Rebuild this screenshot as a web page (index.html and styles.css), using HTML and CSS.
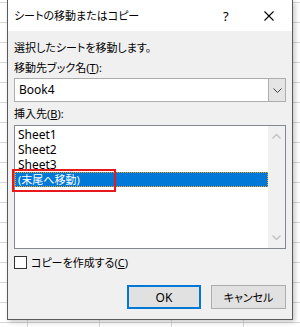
FILE: index.html
```html
<!DOCTYPE html>
<html>

<head>
  <meta charset="UTF-8" />
  <title>シートの移動またはコピー</title>
  <link rel="stylesheet" href="styles.css">
</head>

<body>
  <div class="dialog">
    <div class="titlebar">
      <span class="title">シートの移動またはコピー</span>
      <span class="help">?</span>
      <svg class="close" width="10" height="10" viewBox="0 0 10 10">
        <path d="M0.5 0.5 L9.5 9.5 M9.5 0.5 L0.5 9.5" stroke="#000" stroke-width="1.1" fill="none" />
      </svg>
    </div>
    <div class="content">
      <p class="intro">選択したシートを移動します。</p>

      <label class="field-label">移動先ブック名(<u>T</u>):</label>
      <div class="combo">
        <span class="combo-value">Book4</span>
        <span class="combo-btn">
          <svg width="9" height="5" viewBox="0 0 9 5">
            <path d="M0.5 0.5 L4.5 4.5 L8.5 0.5" stroke="#404040" stroke-width="1" fill="none" />
          </svg>
        </span>
      </div>

      <label class="field-label">挿入先(<u>B</u>):</label>
      <div class="listbox">
        <ul class="items">
          <li class="latin">Sheet1</li>
          <li class="latin">Sheet2</li>
          <li class="latin">Sheet3</li>
          <li class="selected">(末尾へ移動)</li>
        </ul>
        <div class="scrollbar">
          <svg width="9" height="5" viewBox="0 0 9 5">
            <path d="M0.5 4.5 L4.5 0.5 L8.5 4.5" stroke="#c2c2c2" stroke-width="1.4" fill="none" />
          </svg>
          <svg width="9" height="5" viewBox="0 0 9 5">
            <path d="M0.5 0.5 L4.5 4.5 L8.5 0.5" stroke="#c2c2c2" stroke-width="1.4" fill="none" />
          </svg>
        </div>
        <div class="highlight"></div>
      </div>

      <div class="check-row">
        <span class="checkbox"></span>
        <span>コピーを作成する(<u>C</u>)</span>
      </div>

      <div class="buttons">
        <button class="btn btn-default">OK</button>
        <button class="btn">キャンセル</button>
      </div>
    </div>
  </div>
</body>

</html>
```

FILE: styles.css
```css
* {
  margin: 0;
  padding: 0;
  box-sizing: border-box;
}

body {
  width: 300px;
  height: 327px;
  overflow: hidden;
  background-color: #fff;
  background-image:
    linear-gradient(to bottom, transparent 2px, #d6d6d6 2px, #d6d6d6 3px, transparent 3px),
    linear-gradient(to right, transparent 27px, #d6d6d6 27px, #d6d6d6 28px, transparent 28px);
  background-size: 100% 20px, 72px 100%;
  font-family: "Noto Sans", "Noto Sans CJK JP", sans-serif;
  font-size: 11px;
  font-feature-settings: "palt";
  color: #000;
}

.dialog {
  margin-left: 7px;
  width: 286px;
  height: 320px;
  background: #f0f0f0;
  border: 1px solid #5a5a5a;
  border-top: none;
  box-shadow: 2px 2px 5px rgba(0, 0, 0, 0.22);
}

/* title bar */
.titlebar {
  height: 31px;
  background: #fff;
  display: flex;
  align-items: center;
  padding-left: 6px;
}

.title {
  flex: 1;
  line-height: 15px;
}

.help {
  width: 12px;
  margin-right: 29px;
  font-size: 13px;
}

.close {
  margin-right: 18px;
}

/* body */
.content {
  padding: 9px 6px 0 6px;
}

.intro {
  line-height: 15px;
}

.field-label {
  display: block;
  line-height: 15px;
  margin-top: 5px;
}

u {
  text-underline-offset: 1px;
}

.combo {
  display: flex;
  height: 24px;
  margin-top: 3px;
  background: #fff;
  border: 1px solid #adadad;
}

.combo-value {
  flex: 1;
  padding-left: 4px;
  font-size: 12px;
  line-height: 22px;
}

.combo-btn {
  width: 17px;
  background: #e5e5e5;
  border-left: 1px solid #adadad;
  display: flex;
  align-items: center;
  justify-content: center;
}

.combo + .field-label {
  margin-top: 4px;
}

.listbox {
  position: relative;
  display: flex;
  height: 124px;
  margin-top: 4px;
  background: #fff;
  border: 1px solid #828790;
}

.items {
  flex: 1;
  list-style: none;
  padding-top: 1px;
}

.items li {
  height: 15px;
  line-height: 15px;
  padding-left: 3px;
}

.items li.latin {
  font-size: 12px;
}

.items li.selected {
  background: #0078d7;
  color: #fff;
  border: 1px dotted #f7a11a;
  padding-left: 2px;
  line-height: 13px;
}

.scrollbar {
  width: 17px;
  background: #f0f0f0;
  display: flex;
  flex-direction: column;
  justify-content: space-between;
  align-items: center;
  padding: 8px 0 8px 0;
}

/* red annotation box over the selected item */
.highlight {
  position: absolute;
  left: -3px;
  top: 43px;
  width: 104px;
  height: 23px;
  border: 2px solid #e8191c;
}

.check-row {
  display: flex;
  align-items: center;
  gap: 4px;
  height: 15px;
  margin-top: 6px;
  line-height: 15px;
}

.checkbox {
  width: 13px;
  height: 13px;
  background: #fff;
  border: 1px solid #333;
}

.buttons {
  display: flex;
  justify-content: flex-end;
  gap: 10px;
  margin-top: 15px;
}

.btn {
  width: 75px;
  height: 24px;
  background: #e1e1e1;
  border: 1px solid #adadad;
  font-family: inherit;
  font-size: 11px;
  font-feature-settings: "palt";
  color: #000;
}

.btn-default {
  width: 74px;
  font-size: 12px;
  border: 2px solid #0078d7;
}
```
